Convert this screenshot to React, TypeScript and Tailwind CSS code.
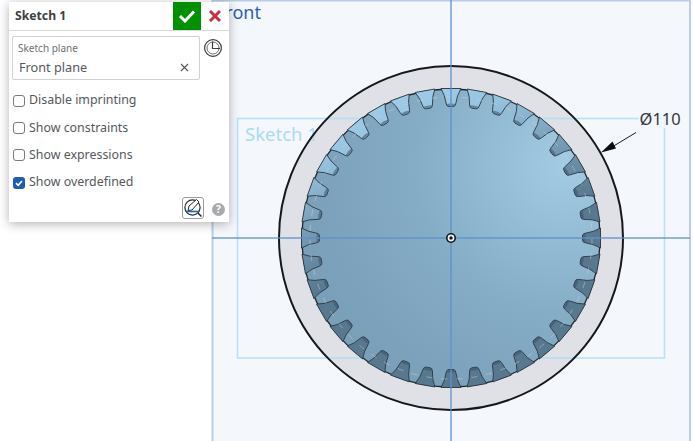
// App.tsx
import React from "react";

const CX = 451;
const CY = 238;

// turn a point given relative to the top tooth around the gear centre
const rot = (x: number, r: number, deg: number) => {
  const a = (deg * Math.PI) / 180;
  const px = x * Math.cos(a) + r * Math.sin(a);
  const py = x * Math.sin(a) - r * Math.cos(a);
  return `${(CX + px).toFixed(2)} ${(CY + py).toFixed(2)}`;
};

const teeth = Array.from({ length: 36 }, (_, i) => i * 10);

const Tooth: React.FC<{ deg: number }> = ({ deg }) => {
  const body = `M${rot(-10, 149.5, deg)} Q${rot(-6, 143, deg)} ${rot(-4.7, 134, deg)} Q${rot(-4.2, 131.5, deg)} ${rot(-2, 131.5, deg)} L${rot(2, 131.5, deg)} Q${rot(4.2, 131.5, deg)} ${rot(4.7, 134, deg)} Q${rot(6, 143, deg)} ${rot(10, 149.5, deg)} Z`;
  const cap = `M${rot(-4.7, 134, deg)} Q${rot(-4.2, 131.5, deg)} ${rot(-2, 131.5, deg)} L${rot(2, 131.5, deg)} Q${rot(4.2, 131.5, deg)} ${rot(4.7, 134, deg)} Q${rot(0, 135.2, deg)} ${rot(-4.7, 134, deg)} Z`;
  return (
    <g>
      <path d={body} fill="url(#toothFill)" stroke="#2c3640" strokeWidth="0.9" strokeLinejoin="round" />
      <path d={cap} fill="#3c5468" fillOpacity="0.55" />
    </g>
  );
};

const GearCanvas: React.FC = () => (
  <svg width="693" height="441" viewBox="0 0 693 441" className="absolute top-0 left-0">
    <defs>
      <linearGradient id="toothFill" gradientUnits="userSpaceOnUse" x1="380" y1="80" x2="440" y2="250">
        <stop offset="0" stopColor="#a0cfec" />
        <stop offset="0.3" stopColor="#98c5e2" />
        <stop offset="0.6" stopColor="#7ca2bd" />
        <stop offset="1" stopColor="#57788f" />
      </linearGradient>
      <radialGradient id="discFill" gradientUnits="userSpaceOnUse" cx="565" cy="165" r="270">
        <stop offset="0" stopColor="#a3cbe3" />
        <stop offset="0.55" stopColor="#86adc6" />
        <stop offset="1" stopColor="#7a9fb8" />
      </radialGradient>
    </defs>

    {/* plane */}
    <rect x="212.5" y="0.5" width="477.5" height="445" fill="#f4f8fc" stroke="#b9cde8" strokeWidth="2" />

    {/* ring */}
    <circle cx={CX} cy={CY} r="172" fill="#dfe1e6" />

    {/* sketch label and rectangle show through the ring */}
    <text x="245" y="141" fontSize="18.5" fill="#a9daf6" fontFamily="'Noto Sans', sans-serif">
      Sketch 1
    </text>
    <rect x="237.5" y="118.5" width="427" height="239.5" fill="none" stroke="#aadcf8" strokeWidth="1.6" opacity="0.8" />
    <circle cx={CX} cy={CY} r="172" fill="none" stroke="#15181b" strokeWidth="2" />

    {/* inner bore */}
    <circle cx={CX} cy={CY} r="149" fill="url(#discFill)" stroke="#20262c" strokeWidth="1.3" />
    {teeth.map((deg) => (
      <Tooth key={deg} deg={deg} />
    ))}
    <circle cx={CX} cy={CY} r="141" fill="none" stroke="#cfd2d4" strokeOpacity="0.55" strokeWidth="0.9" strokeDasharray="6 9" />

    {/* axes */}
    <line x1="212" y1="238" x2="690" y2="238" stroke="#5f8fcb" strokeOpacity="0.65" strokeWidth="2" />
    <line x1="451" y1="0" x2="451" y2="441" stroke="#5f8fcb" strokeOpacity="0.65" strokeWidth="2" />

    {/* origin */}
    <circle cx={CX} cy={CY} r="5" fill="#14171a" />
    <circle cx={CX} cy={CY} r="3.4" fill="#f2f2f2" />
    <circle cx={CX} cy={CY} r="1.7" fill="#14171a" />

    {/* dimension */}
    <rect x="638" y="111" width="45" height="17" fill="#f4f8fc" fillOpacity="0.75" />
    <text x="639.5" y="125" fontSize="16.5" fill="#34363a" fontFamily="'Noto Sans', sans-serif">
      Ø110
    </text>
    <line x1="636" y1="132.5" x2="612" y2="147" stroke="#1a1c1f" strokeWidth="1" />
    <path d="M601 152.5 L612.5 141.5 L616 148.5 Z" fill="#0c0d0f" />

    <text x="216" y="18.5" fontSize="18" fill="#2f5fb3" fontFamily="'Noto Sans', sans-serif">
      Front
    </text>
  </svg>
);

const CheckRow: React.FC<{ label: string; checked?: boolean }> = ({ label, checked }) => (
  <div className="flex items-center h-[27.3px] gap-[4px]">
    {checked ? (
      <span className="w-[12px] h-[12px] rounded-[3px] bg-[#1c5cb4] flex items-center justify-center">
        <svg width="10" height="10" viewBox="0 0 10 10">
          <path d="M2 5.2 L4.2 7.3 L8 3" fill="none" stroke="#fff" strokeWidth="1.8" />
        </svg>
      </span>
    ) : (
      <span className="w-[12px] h-[12px] rounded-[3px] border border-[#777a7e] bg-white" />
    )}
    <span className="text-[12.4px] text-[#54585c] leading-none">{label}</span>
  </div>
);

const Panel: React.FC = () => (
  <div className="absolute left-[9px] top-[2px] w-[220px] h-[220px] bg-white shadow-[0_2px_10px_rgba(0,0,0,0.3)] flex flex-col">
    {/* header */}
    <div className="flex items-center h-[29px] border-b border-[#d9d9d9] shrink-0">
      <span className="flex-1 pl-[6px] text-[12.2px] font-bold text-[#3c3f42]">Sketch 1</span>
      <button className="w-[28px] h-[28px] bg-[#009000] flex items-center justify-center">
        <svg width="18" height="14" viewBox="0 0 18 14">
          <path d="M2 7 L7 12 L16 2.5" fill="none" stroke="#fff" strokeWidth="3" />
        </svg>
      </button>
      <button className="w-[28px] h-[28px] flex items-center justify-center">
        <svg width="14" height="14" viewBox="0 0 14 14">
          <path d="M2 2 L12 12 M12 2 L2 12" fill="none" stroke="#c4323f" strokeWidth="3" />
        </svg>
      </button>
    </div>

    {/* sketch plane field */}
    <div className="flex items-start mt-[5px] pl-[3px]">
      <div className="w-[188px] h-[44px] border border-[#cfd1d3] rounded-[2px] pl-[5px] pr-[10px] pt-[5px] relative">
        <div className="text-[10px] leading-[12px] text-[#6b6f73]">Sketch plane</div>
        <div className="flex items-center justify-between mt-[4px] pl-[1px]">
          <span className="text-[12.7px] leading-[18px] text-[#55595d]">Front plane</span>
          <svg width="9" height="9" viewBox="0 0 9 9">
            <path d="M1 1 L8 8 M8 1 L1 8" stroke="#55595d" strokeWidth="1.1" />
          </svg>
        </div>
      </div>
      <svg width="20" height="20" viewBox="0 0 20 20" className="ml-[3px] mt-[2px]">
        <circle cx="10" cy="10" r="8.4" fill="none" stroke="#3a3d40" strokeWidth="1.2" />
        <circle cx="10" cy="10" r="6" fill="none" stroke="#6a6d70" strokeWidth="1" />
        <path d="M9.5 3.5 V10.5 H17" fill="none" stroke="#3a3d40" strokeWidth="1.2" />
      </svg>
    </div>

    {/* options */}
    <div className="flex flex-col pl-[4px] mt-[7px]">
      <CheckRow label="Disable imprinting" />
      <CheckRow label="Show constraints" />
      <CheckRow label="Show expressions" />
      <CheckRow checked label="Show overdefined" />
    </div>

    {/* footer icons */}
    <div className="flex items-center justify-end mt-auto pb-[3px] pr-[4px] gap-[8px]">
      <span className="w-[22px] h-[22px] border border-[#9a9c9e] rounded-[3px] flex items-center justify-center">
        <svg width="20" height="20" viewBox="0 0 20 20">
          <circle cx="9.5" cy="9.5" r="7.6" fill="none" stroke="#25282b" strokeWidth="1.2" />
          <path d="M5 12.5 L6 8 L13.5 1.5 L16 4 L9 12 Z" fill="#fff" stroke="#25282b" strokeWidth="1" />
          <path d="M3 13.5 H16" stroke="#1f5fc4" strokeWidth="1.6" />
          <path d="M15 15 L18.5 18.5" stroke="#25282b" strokeWidth="1.5" />
        </svg>
      </span>
      <span className="w-[13px] h-[13px] rounded-full bg-[#a8a9ab] text-white text-[10px] font-bold leading-[13px] text-center mt-[2px]">
        ?
      </span>
    </div>
  </div>
);

const App: React.FC = () => {
  return (
    <div className="relative w-[693px] h-[441px] overflow-hidden bg-white font-['Noto_Sans',sans-serif]">
      <GearCanvas />
      <Panel />
    </div>
  );
};

export default App;
